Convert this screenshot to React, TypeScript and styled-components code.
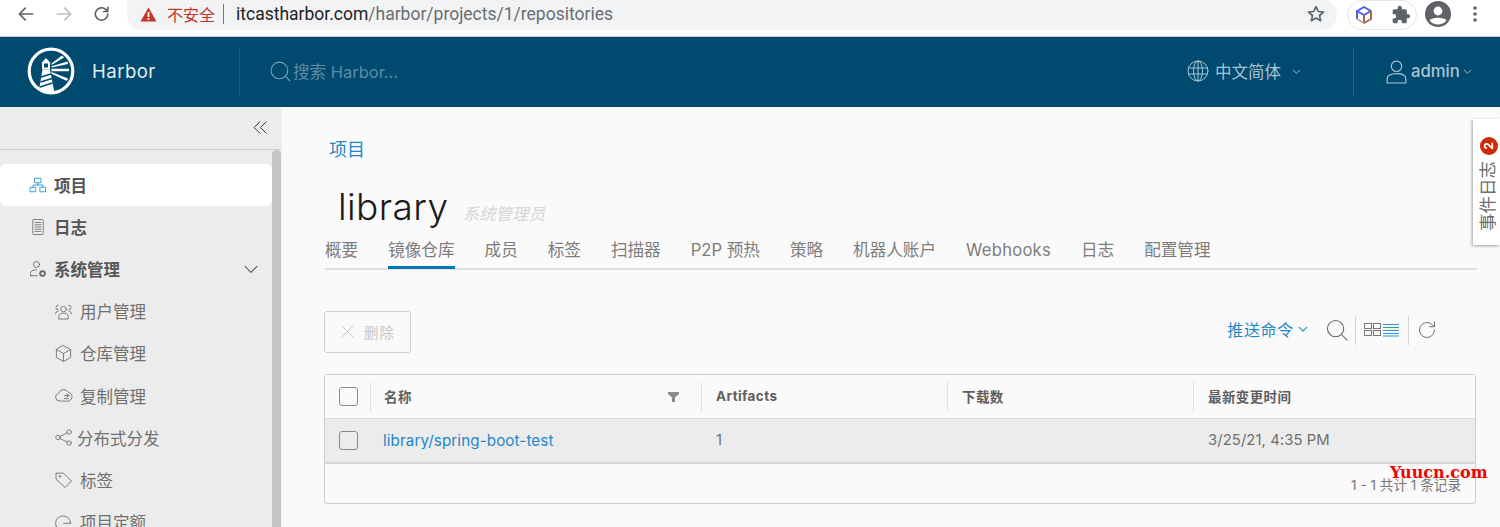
import React from "react";
import styled, { createGlobalStyle } from "styled-components";

const FONT = `Inter, "Noto Sans CJK SC", sans-serif`;

const Global = createGlobalStyle`
  html, body { margin: 0; padding: 0; background: #fafafa; overflow: hidden; }
  * { box-sizing: border-box; }
  body { font-family: ${FONT}; }
`;

const Page = styled.div`
  position: relative;
  width: 1500px;
  height: 527px;
  overflow: hidden;
  display: flex;
  flex-direction: column;
`;

const Chrome = styled.div`
  height: 37px;
  flex: none;
  background: #fff;
  border-bottom: 1px solid #c9ced1;
  display: flex;
  align-items: flex-start;
  padding-left: 16px;
`;
const NavIcons = styled.div`
  display: flex;
  gap: 18px;
  padding-top: 4px;
  width: 111px;
`;
const Omnibox = styled.div`
  width: 1210px;
  height: 30px;
  background: #f1f3f4;
  border-radius: 0 15px 15px 15px;
  display: flex;
  align-items: center;
  padding: 0 11px 2px 13px;
`;
const Insecure = styled.span`
  color: #c5352b;
  font: 16px "Noto Sans CJK SC", sans-serif;
  margin-left: 10px;
  padding-right: 8px;
  border-right: 1px solid #777;
  line-height: 20px;
`;
const Url = styled.span`
  font: 17.5px Roboto, sans-serif;
  color: #6a6d71;
  margin-left: 12px;
  flex: 1;
  b { font-weight: 400; color: #1f2124; }
`;
const ExtPill = styled.div`
  width: 70px;
  height: 30px;
  margin-left: 10px;
  border: 1px solid #e4e6e8;
  border-radius: 15px;
  display: flex;
  align-items: center;
  justify-content: space-between;
  padding: 0 5px 0 7px;
`;
const Avatar = styled.div`
  margin-left: 8px;
  margin-top: 1px;
  display: flex;
  align-items: center;
  gap: 22px;
`;

const Header = styled.header`
  height: 70px;
  flex: none;
  background: #004a70;
  display: flex;
  align-items: center;
  color: #fff;
`;
const Brand = styled.div`
  width: 240px;
  height: 48px;
  border-right: 1px solid #17597c;
  display: flex;
  align-items: center;
  padding-left: 27px;
  gap: 17px;
  font-size: 18.5px;
  letter-spacing: 0.5px;
  color: #e6eef2;
`;
const BrandName = styled.span`
  margin-bottom: 2px;
`;
const Search = styled.div`
  display: flex;
  align-items: center;
  margin-left: 28px;
  flex: 1;
  font-size: 16.5px;
  color: #5d8aa3;
  padding-bottom: 2px;
`;
const Lang = styled.div`
  display: flex;
  align-items: center;
  color: #a9c3d1;
  font-size: 16.5px;
  gap: 5px;
  width: 168px;
  height: 48px;
  border-right: 1px solid #2b6484;
  padding-bottom: 2px;
`;
const LangChevron = styled.span`
  display: flex;
  margin-left: 5px;
`;
const User = styled.div`
  display: flex;
  align-items: center;
  color: #a9c3d1;
  font-size: 16.7px;
  font-weight: 500;
  padding-left: 30px;
  padding-bottom: 2px;
  width: 146px;
  gap: 2px;
`;

const Body = styled.div`
  flex: 1;
  display: flex;
  min-height: 0;
`;
const Sidebar = styled.aside`
  width: 282px;
  flex: none;
  background: #ececec;
  border-right: 1px solid #f2f2f2;
  display: flex;
  flex-direction: column;
  overflow: hidden;
`;
const Collapse = styled.div`
  height: 43px;
  flex: none;
  border-bottom: 1px solid #cfcfcf;
  display: flex;
  align-items: center;
  justify-content: flex-end;
  padding: 0 12px 2px 0;
`;
const SideBody = styled.div`
  flex: 1;
  display: flex;
`;
const NavList = styled.nav`
  width: 272px;
  padding-top: 14px;
`;
const Scrollbar = styled.div`
  width: 9px;
  background: #c4c4c4;
  border-radius: 5px 5px 0 0;
`;
const NavItem = styled.div<{ $active?: boolean; $sub?: boolean; $tight?: boolean }>`
  height: 42.2px;
  display: flex;
  align-items: center;
  border-radius: 6px;
  padding-bottom: 1px;
  background: ${(p) => (p.$active ? "#fff" : "transparent")};
  padding-left: ${(p) => (p.$sub ? "54px" : "29px")};
  gap: ${(p) => (p.$tight ? "4px" : "7px")};
  font-size: 16.5px;
  font-weight: ${(p) => (p.$sub ? 400 : 700)};
  color: ${(p) => (p.$sub ? "#707070" : "#565656")};
  white-space: nowrap;
`;
const Grow = styled.span`
  flex: 1;
`;
const Chevron = styled.span`
  display: flex;
  padding-right: 13px;
`;

const Main = styled.main`
  flex: 1;
  background: #fafafa;
  padding: 30px 24px 0 42px;
  min-width: 0;
`;
const Breadcrumb = styled.a`
  display: block;
  color: #1e88c7;
  font-size: 18px;
  line-height: 26px;
  margin-left: 5px;
`;
const TitleRow = styled.div`
  display: flex;
  align-items: baseline;
  margin: 21px 0 0 14px;
  height: 46px;
`;
const Title = styled.h1`
  margin: 0;
  font-weight: 300;
  font-size: 37px;
  line-height: 46px;
  color: #1a1a1a;
  letter-spacing: 0.4px;
`;
const Role = styled.span`
  margin-left: 14px;
  font-style: italic;
  font-size: 16.5px;
  color: #d6d6d6;
`;
const Tabs = styled.div`
  display: flex;
  gap: 30px;
  height: 37px;
  margin: 3px 0 0 1px;
  border-bottom: 2px solid #dedede;
  width: 1152px;
`;
const Tab = styled.div<{ $active?: boolean; $latin?: boolean }>`
  height: 36px;
  padding-top: 6px;
  font-size: 16.6px;
  line-height: 22px;
  color: #7d7d7d;
  white-space: nowrap;
  ${(p) => (p.$latin ? "letter-spacing: 0.25px;" : "")}
  ${(p) => (p.$active ? "border-bottom: 3px solid #0079b8;" : "")}
`;
const Toolbar = styled.div`
  margin-top: 40px;
  display: flex;
  align-items: center;
  justify-content: space-between;
  height: 43px;
`;
const DeleteBtn = styled.button`
  width: 87px;
  height: 42px;
  background: transparent;
  border: 1px solid #cfcfcf;
  border-radius: 3px;
  display: flex;
  align-items: center;
  justify-content: center;
  gap: 9px;
  color: #c6c6c6;
  font: 14.5px ${FONT};
  letter-spacing: 1px;
`;
const Actions = styled.div`
  display: flex;
  align-items: center;
  margin-right: 39px;
  padding-bottom: 3px;
`;
const PushCmd = styled.span`
  color: #1e88c7;
  font-size: 16px;
  letter-spacing: 0.7px;
  display: flex;
  align-items: center;
  gap: 4px;
  margin: 0 18px 2px 0;
`;
const Sep = styled.span<{ $m: string }>`
  width: 1px;
  height: 29px;
  background: #d5d5d5;
  margin: ${(p) => p.$m};
`;

const Table = styled.div`
  margin-top: 21px;
  width: 1152px;
  height: 130px;
  border: 1px solid #cccccc;
  border-radius: 3px;
  background: #fafafa;
  display: flex;
  flex-direction: column;
`;
const COLS = "45px 331px 246px 246px 1fr";
const HeadRow = styled.div`
  height: 44px;
  flex: none;
  display: grid;
  grid-template-columns: ${COLS};
  align-items: center;
  background: #fafafa;
  border-bottom: 1px solid #dcdcdc;
`;
const HeadCell = styled.div<{ $divider?: boolean }>`
  height: 30px;
  display: flex;
  align-items: center;
  justify-content: space-between;
  padding: 0 22px 0 ${(p) => (p.$divider ? "14px" : "13px")};
  padding-bottom: 2px;
  border-left: 1px solid #e2e2e2;
  font-size: 13.5px;
  font-weight: 700;
  color: #5e5e5e;
  letter-spacing: 0.4px;
`;
const CheckCell = styled.div`
  display: flex;
  align-items: center;
  padding-left: 14px;
`;
const Check = styled.span`
  width: 19px;
  height: 19px;
  display: block;
  border: 1px solid #8a8a8a;
  border-radius: 3px;
`;
const BodyRow = styled.div`
  height: 45px;
  flex: none;
  display: grid;
  grid-template-columns: ${COLS};
  align-items: center;
  background: #ececec;
  border-bottom: 2px solid #d7d7d7;
  padding-bottom: 1px;
  font-size: 14.8px;
  color: #666;
`;
const Cell = styled.div<{ $link?: boolean }>`
  padding-left: ${(p) => (p.$link ? "13px" : "15px")};
  color: ${(p) => (p.$link ? "#1e88c7" : "#707070")};
  font-size: ${(p) => (p.$link ? "15.2px" : "14.8px")};
  letter-spacing: 0.1px;
`;
const Footer = styled.div`
  flex: 1;
  display: flex;
  align-items: center;
  justify-content: flex-end;
  padding: 0 14px 0 0;
  font-size: 13.6px;
  color: #777;
`;

const EventTab = styled.div`
  position: absolute;
  left: 1473px;
  top: 119px;
  width: 27px;
  height: 126px;
  background: #fff;
  box-shadow: -1px 1px 3px rgba(0, 0, 0, 0.35);
  display: flex;
  flex-direction: column;
  align-items: center;
  padding-top: 18px;
`;
const Badge = styled.span`
  width: 18px;
  height: 18px;
  border-radius: 50%;
  background: #cd2a05;
  color: #fff;
  font: 700 12px/18px Inter, sans-serif;
  text-align: center;
  transform: rotate(-90deg);
  margin-left: 4px;
  flex: none;
`;
const EventLabel = styled.span`
  writing-mode: vertical-rl;
  text-orientation: sideways;
  transform: rotate(180deg);
  font-size: 17.5px;
  color: #6e6e6e;
  margin-top: 6px;
  margin-left: 3px;
  line-height: 20px;
`;
const Watermark = styled.div`
  position: absolute;
  left: 1390px;
  top: 462px;
  font: 700 16px/22px "DejaVu Serif", serif;
  color: #f40000;
`;

type SP = { size?: number; children: React.ReactNode; color?: string; w?: number };
const Ico = ({ size = 18, children, color = "#666", w = 1.2 }: SP) => (
  <svg width={size} height={size} viewBox="0 0 24 24" fill="none" stroke={color} strokeWidth={w} strokeLinecap="round" strokeLinejoin="round" style={{ flex: "none", display: "block" }}>
    {children}
  </svg>
);

const Logo = () => (
  <svg width="48" height="48" viewBox="0 0 48 48" style={{ flex: "none", marginBottom: 2 }}>
    <defs>
      <clipPath id="logoClip"><circle cx="24" cy="24" r="21" /></clipPath>
    </defs>
    <circle cx="24" cy="24" r="21.800" fill="#004a70" stroke="#fff" strokeWidth="3.200" />
    <g clipPath="url(#logoClip)">
      <path d="M15.500 22.500h7.500L27.500 46H11.500Z" fill="#fff" />
      <path d="M15 15.500L19 11l4 4.500V22.500H15Z" fill="#fff" />
      <rect x="17" y="16.500" width="4" height="4" fill="#004a70" />
      <path d="M14 30l10-3M13.500 35l11.500-3.500M13 40l12.500-4" stroke="#004a70" strokeWidth="1.500" />
    </g>
    <path d="M24.500 16.500L35 8.500L37 10.500L24.500 18ZM24.500 19.200L40.500 14.500L41 17L24.500 20.500ZM24.500 21.800H42V24.200H24.500ZM24.500 25L41 31.500L39.800 34L24.500 26.800Z" fill="#fff" />
  </svg>
);

export default function App() {
  return (
    <Page>
      <Global />
      <Chrome>
        <NavIcons>
          <Ico size={20} color="#5f6368" w={2}><path d="M20 12H4M11 5l-7 7 7 7" /></Ico>
          <Ico size={20} color="#bcbfc3" w={2}><path d="M4 12h16M13 5l7 7-7 7" /></Ico>
          <Ico size={20} color="#5f6368" w={2}><path d="M19 12a7.500 7.500 0 1 1-2.200-5.300L19 9M19 4v5h-5" /></Ico>
        </NavIcons>
        <Omnibox>
          <svg width="17" height="15" viewBox="0 0 17 15" style={{ flex: "none" }}>
            <path d="M8.500 0.500 L16.500 14.500 H0.500 Z" fill="#c5352b" />
            <rect x="7.600" y="5" width="1.800" height="5" fill="#fff" />
            <rect x="7.600" y="11" width="1.800" height="1.800" fill="#fff" />
          </svg>
          <Insecure>不安全</Insecure>
          <Url><b>itcastharbor.com</b>/harbor/projects/1/repositories</Url>
          <svg width="20" height="20" viewBox="0 0 24 24" fill="none" stroke="#5f6368" strokeWidth="2" strokeLinejoin="round" style={{ flex: "none" }}>
            <path d="M12 3l2.700 6 6.300.6-4.800 4.200 1.400 6.300L12 16.800 6.400 20.100l1.400-6.300L3 9.600 9.300 9z" />
          </svg>
        </Omnibox>
        <ExtPill>
          <svg width="18" height="20" viewBox="0 0 18 20" fill="none" strokeWidth="2" strokeLinejoin="round" style={{ flex: "none" }}>
            <path d="M2 14V6l7-4 7 4" stroke="#4a5cf0" />
            <path d="M2 6l7 4 7-4" stroke="#4a5cf0" />
            <path d="M9 10v8l7-4V6" stroke="#9a6a50" />
            <path d="M2 14l7 4" stroke="#c9a090" />
          </svg>
          <svg width="20" height="20" viewBox="0 0 24 24" fill="#5f6368" style={{ flex: "none" }}>
            <path d="M20.500 11H19V7a2 2 0 0 0-2-2h-4V3.500a2.500 2.500 0 0 0-5 0V5H4a2 2 0 0 0-2 2v3.800h1.500a2.700 2.700 0 0 1 0 5.400H2V20a2 2 0 0 0 2 2h3.800v-1.500a2.700 2.700 0 0 1 5.400 0V22H17a2 2 0 0 0 2-2v-4h1.500a2.500 2.500 0 0 0 0-5z" />
          </svg>
        </ExtPill>
        <Avatar>
          <svg width="26" height="26" viewBox="0 0 26 26" style={{ flex: "none" }}>
            <circle cx="13" cy="13" r="13" fill="#5f6368" />
            <circle cx="13" cy="10" r="4.400" fill="#fff" />
            <path d="M4.500 19.500c2-3.600 15-3.600 17 0a11 11 0 0 1-17 0z" fill="#fff" />
          </svg>
          <svg width="4" height="16" viewBox="0 0 4 16" fill="#5f6368" style={{ flex: "none" }}>
            <circle cx="2" cy="2" r="1.800" />
            <circle cx="2" cy="8" r="1.800" />
            <circle cx="2" cy="14" r="1.800" />
          </svg>
        </Avatar>
      </Chrome>

      <Header>
        <Brand>
          <Logo />
          <BrandName>Harbor</BrandName>
        </Brand>
        <Search>
          <Ico size={25} color="#7fa3b7" w={1}><circle cx="11" cy="11" r="8" /><path d="M17 17l4 4" /></Ico>
          <span>搜索 Harbor...</span>
        </Search>
        <Lang>
          <Ico size={24} color="#a9c3d1" w={1}>
            <circle cx="12" cy="12" r="10" />
            <ellipse cx="12" cy="12" rx="4.500" ry="10" />
            <path d="M12 2v20M2.500 9h19M2.500 15h19" />
          </Ico>
          <span>中文简体</span>
          <LangChevron>
            <Ico size={11} color="#a9c3d1" w={2}><path d="M5 9l7 7 7-7" /></Ico>
          </LangChevron>
        </Lang>
        <User>
          <Ico size={25} color="#a9c3d1" w={1.100}>
            <circle cx="12" cy="7" r="5" />
            <path d="M3 23v-4c0-3 3-5 9-5s9 2 9 5v4z" />
          </Ico>
          <span>admin</span>
          <Ico size={11} color="#a9c3d1" w={2}><path d="M5 9l7 7 7-7" /></Ico>
        </User>
      </Header>

      <Body>
        <Sidebar>
          <Collapse>
            <Ico size={17} color="#333" w={1.400}><path d="M11 4l-8 8 8 8M20 4l-8 8 8 8" /></Ico>
          </Collapse>
          <SideBody>
            <NavList>
              <NavItem $active>
                <Ico color="#2d95d3">
                  <rect x="8" y="3" width="8" height="6" />
                  <rect x="2" y="15" width="7" height="6" />
                  <rect x="15" y="15" width="7" height="6" />
                  <path d="M12 9v3M5.500 15v-3h13v3" />
                </Ico>
                <span>项目</span>
              </NavItem>
              <NavItem>
                <Ico color="#777">
                  <rect x="5" y="2" width="14" height="20" rx="1" />
                  <path d="M8 6h8M8 9h8M8 12h8M8 15h8M8 18h8" />
                </Ico>
                <span>日志</span>
              </NavItem>
              <NavItem>
                <Ico color="#666">
                  <circle cx="10" cy="6" r="4" />
                  <path d="M2 21v-3c0-3 3-5 8-5M2 21h9" />
                  <circle cx="18" cy="18" r="3.200" strokeWidth="2.400" />
                </Ico>
                <span>系统管理</span>
                <Grow />
                <Chevron>
                  <Ico size={16} color="#666" w={1.800}><path d="M3 8l9 9 9-9" /></Ico>
                </Chevron>
              </NavItem>
              <NavItem $sub>
                <Ico color="#777" size={19}>
                  <circle cx="12" cy="9" r="3.500" />
                  <path d="M6 21v-3c0-2.500 2.500-4 6-4s6 1.500 6 4v3zM5.500 4a3 3 0 0 0 0 6M18.500 4a3 3 0 0 1 0 6M2 15c0-2 1-3 3-3M22 15c0-2-1-3-3-3" />
                </Ico>
                <span>用户管理</span>
              </NavItem>
              <NavItem $sub>
                <Ico color="#777" size={19}>
                  <path d="M12 2l9 5v10l-9 5-9-5V7zM3 7l9 5 9-5M12 12v10" />
                </Ico>
                <span>仓库管理</span>
              </NavItem>
              <NavItem $sub>
                <Ico color="#777" size={19}>
                  <path d="M7 19a5 5 0 0 1-1-9.900A6.500 6.500 0 0 1 18 8a5.500 5.500 0 0 1 3 9.500 5 5 0 0 1-2 1.500zM13 12h6M16 10l3 2-3 2M18 16h-5" />
                </Ico>
                <span>复制管理</span>
              </NavItem>
              <NavItem $sub $tight>
                <Ico color="#777" size={19}>
                  <circle cx="5" cy="12" r="2.800" />
                  <circle cx="19" cy="5" r="2.800" />
                  <circle cx="19" cy="19" r="2.800" />
                  <path d="M7.500 10.800L16.500 6.200M7.500 13.200l9 4.600" />
                </Ico>
                <span>分布式分发</span>
              </NavItem>
              <NavItem $sub>
                <Ico color="#777" size={19}>
                  <path d="M3 4h9l10 10-8 8L3 12z" />
                  <circle cx="7.500" cy="8" r="1" />
                </Ico>
                <span>标签</span>
              </NavItem>
              <NavItem $sub>
                <Ico color="#777" size={19}>
                  <path d="M21 13a9.500 9.500 0 1 0-3 7M12 13h9" />
                </Ico>
                <span>项目定额</span>
              </NavItem>
            </NavList>
            <Scrollbar />
          </SideBody>
        </Sidebar>

        <Main>
          <Breadcrumb>项目</Breadcrumb>
          <TitleRow>
            <Title>library</Title>
            <Role>系统管理员</Role>
          </TitleRow>
          <Tabs>
            <Tab>概要</Tab>
            <Tab $active>镜像仓库</Tab>
            <Tab>成员</Tab>
            <Tab>标签</Tab>
            <Tab>扫描器</Tab>
            <Tab>P2P 预热</Tab>
            <Tab>策略</Tab>
            <Tab>机器人账户</Tab>
            <Tab $latin>Webhooks</Tab>
            <Tab>日志</Tab>
            <Tab>配置管理</Tab>
          </Tabs>
          <Toolbar>
            <DeleteBtn>
              <Ico size={15} color="#c4c4c4" w={1.500}><path d="M3 3l18 18M21 3L3 21" /></Ico>
              <span>删除</span>
            </DeleteBtn>
            <Actions>
              <PushCmd>
                <span>推送命令</span>
                <Ico size={10} color="#1e88c7" w={2.600}><path d="M3 8l9 9 9-9" /></Ico>
              </PushCmd>
              <Ico size={23} color="#666" w={1.100}><circle cx="10" cy="10" r="8.500" /><path d="M16.500 16.500L22 22" /></Ico>
              <Sep $m="0 8px 0 6px" />
              <svg width="36" height="14" viewBox="0 0 36 14" fill="none" style={{ flex: "none" }}>
                <g stroke="#777" strokeWidth="1">
                  <rect x="0.500" y="0.500" width="7" height="5" />
                  <rect x="9.500" y="0.500" width="7" height="5" />
                  <rect x="0.500" y="7.500" width="7" height="5" />
                  <rect x="9.500" y="7.500" width="7" height="5" />
                </g>
                <path d="M19 1.500h16M19 4.500h16M19 7.500h16M19 10.500h16M19 13h16" stroke="#2d95d3" strokeWidth="1" />
              </svg>
              <Sep $m="0 8px 0 8px" />
              <Ico size={20} color="#666" w={1.100}><path d="M21 12a9 9 0 1 1-3-6.700L21 8M21 2v6h-6" /></Ico>
            </Actions>
          </Toolbar>
          <Table>
            <HeadRow>
              <CheckCell><Check /></CheckCell>
              <HeadCell>
                <span>名称</span>
                <svg width="11" height="10" viewBox="0 0 11 10" style={{ flex: "none", marginRight: 0, marginTop: 3 }}>
                  <path d="M0 0h11v2L7 5.500V10H4V5.500L0 2z" fill="#8a8a8a" />
                </svg>
              </HeadCell>
              <HeadCell $divider>Artifacts</HeadCell>
              <HeadCell $divider>下载数</HeadCell>
              <HeadCell $divider>最新变更时间</HeadCell>
            </HeadRow>
            <BodyRow>
              <CheckCell><Check /></CheckCell>
              <Cell $link>library/spring-boot-test</Cell>
              <Cell>1</Cell>
              <Cell />
              <Cell>3/25/21, 4:35 PM</Cell>
            </BodyRow>
            <Footer>1 - 1 共计 1 条记录</Footer>
          </Table>
        </Main>
      </Body>

      <EventTab>
        <Badge>2</Badge>
        <EventLabel>事件日志</EventLabel>
      </EventTab>
      <Watermark>Yuucn.com</Watermark>
    </Page>
  );
}
